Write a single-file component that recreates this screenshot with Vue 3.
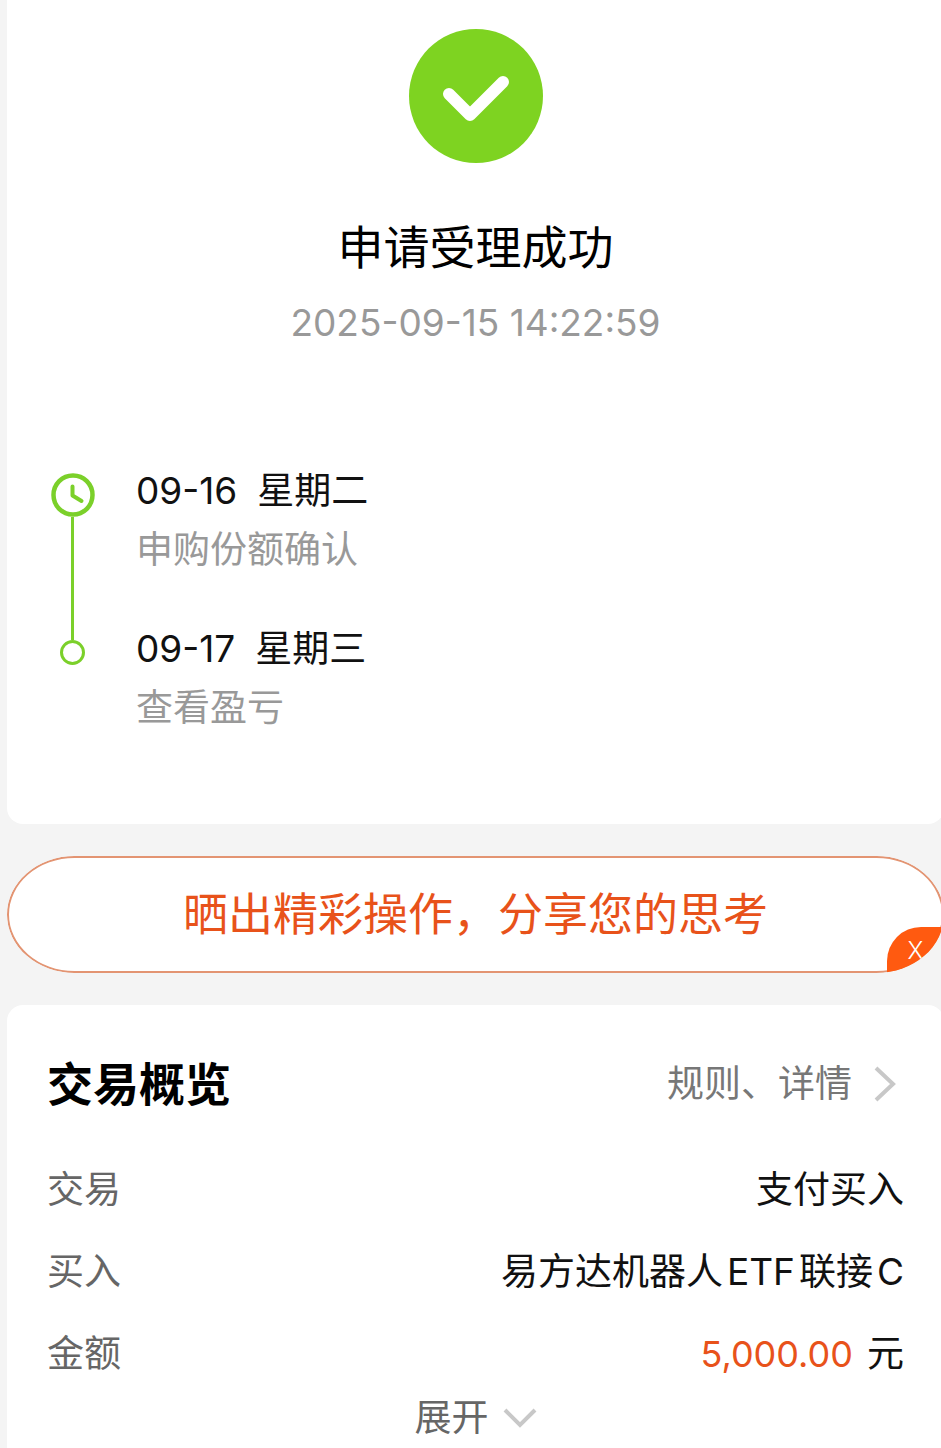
<script setup>
const steps = [
  { date: '09-16', day: '星期二', note: '申购份额确认', active: true },
  { date: '09-17', day: '星期三', note: '查看盈亏', active: false },
]
const rows = [
  { label: '交易', parts: ['支付买入'] },
  { label: '买入', parts: ['易方达机器人', 'ETF', '联接', 'C'] },
  { label: '金额', amount: '5,000.00', parts: ['元'] },
]
</script>

<template>
  <main class="page">
    <section class="card result">
      <svg class="success" viewBox="0 0 134 134" aria-hidden="true">
        <circle cx="67" cy="67" r="67" fill="#7ed321" />
        <path d="M40 65 L61 86 L94 53" fill="none" stroke="#fff" stroke-width="12" stroke-linecap="round" stroke-linejoin="round" />
      </svg>
      <h1 class="title">申请受理成功</h1>
      <time class="time" datetime="2025-09-15T14:22:59">2025-09-15 14:22:59</time>

      <ol class="timeline">
        <li v-for="step in steps" :key="step.date" class="step">
          <div class="rail" :class="{ first: step.active }">
            <template v-if="step.active">
              <svg class="clock" viewBox="0 0 44 44" aria-hidden="true">
                <circle cx="22" cy="22" r="19.5" fill="none" stroke="#7bd02a" stroke-width="4.500" />
                <path d="M21.5 13.500V22.500L30.500 28" fill="none" stroke="#7bd02a" stroke-width="4" stroke-linecap="round" stroke-linejoin="round" />
              </svg>
              <span class="line grow"></span>
            </template>
            <template v-else>
              <span class="line short"></span>
              <span class="dot"></span>
            </template>
          </div>
          <div class="info">
            <p class="date"><span>{{ step.date }}</span><span>{{ step.day }}</span></p>
            <p class="note">{{ step.note }}</p>
          </div>
        </li>
      </ol>
    </section>

    <div class="share">
      <button type="button" class="share-main">晒出精彩操作，分享您的思考</button>
      <button type="button" class="share-close" aria-label="关闭">X</button>
    </div>

    <section class="card overview">
      <header class="head">
        <h2>交易概览</h2>
        <a href="#" class="more">
          规则、详情
          <svg class="chev-right" viewBox="0 0 22 36" aria-hidden="true">
            <path d="M2 2 L19 18 L2 34" fill="none" stroke="#c8c8c8" stroke-width="4" />
          </svg>
        </a>
      </header>
      <dl class="rows">
        <div v-for="row in rows" :key="row.label" class="row">
          <dt>{{ row.label }}</dt>
          <dd>
            <span v-if="row.amount" class="amount">{{ row.amount }}</span>
            <span v-for="part in row.parts" :key="part">{{ part }}</span>
          </dd>
        </div>
      </dl>
      <button type="button" class="expand">
        展开
        <svg class="chev-down" viewBox="0 0 34 20" aria-hidden="true">
          <path d="M2 2 L17 17 L32 2" fill="none" stroke="#c8c8c8" stroke-width="4" />
        </svg>
      </button>
    </section>
  </main>
</template>

<style>
body {
  margin: 0;
  background: #f4f4f4;
}
</style>

<style scoped>
.page {
  display: flex;
  flex-direction: column;
  gap: 32px;
  padding-left: 7px;
  overflow-x: hidden;
  background: #f4f4f4;
  color: #111;
  font-family: Inter, "Noto Sans CJK SC", sans-serif;
  font-size: 37px;
}
.card,
.share {
  margin-right: -3px;
}
.card {
  padding: 0 40px;
  background: #fff;
}
h1, h2, p, ol, dl, dd {
  margin: 0;
  padding: 0;
}
button {
  border: 0;
  padding: 0;
  background: none;
  font: inherit;
  cursor: pointer;
}
.result {
  display: flex;
  flex-direction: column;
  align-items: center;
  padding-top: 29px;
  padding-bottom: 87px;
  border-radius: 0 0 16px 16px;
}
.success {
  width: 134px;
  height: 134px;
}
.title {
  margin-top: 54px;
  font-size: 46px;
  font-weight: 400;
  line-height: 60px;
  color: #000;
}
.time {
  margin-top: 22px;
  line-height: 48px;
  color: #999;
}
.timeline {
  align-self: stretch;
  margin-top: 114px;
  padding-left: 4px;
  list-style: none;
}
.step {
  display: flex;
  gap: 42px;
}
.step:not(:last-child) .info {
  padding-bottom: 40px;
}
.rail {
  display: flex;
  flex-direction: column;
  align-items: center;
  width: 43px;
}
.rail.first {
  padding-top: 12px;
}
.clock {
  width: 44px;
  height: 44px;
}
.line {
  width: 3px;
  background: #7bd02a;
}
.grow {
  flex: 1;
}
.short {
  height: 21px;
}
.dot {
  box-sizing: border-box;
  width: 25px;
  height: 25px;
  border: 3px solid #7bd02a;
  border-radius: 50%;
}
.date,
.note {
  line-height: 59px;
}
.date {
  display: flex;
  gap: 20px;
}
.note {
  color: #999;
}
.share {
  position: relative;
  overflow: hidden;
  border-radius: 68px / 59px;
}
.share-main {
  display: block;
  width: 100%;
  border: 2px solid #e39472;
  border-radius: inherit;
  background: #fff;
  font-size: 45px;
  line-height: 113px;
  color: #e8521a;
}
.share-close {
  position: absolute;
  right: 0;
  bottom: 0;
  width: 57px;
  height: 46px;
  border-radius: 34px 0 0 0;
  background: #ff5a10;
  color: #fff;
  font-size: 24px;
  font-weight: 300;
}
.overview {
  padding-top: 49px;
  padding-bottom: 7px;
  border-radius: 16px 16px 0 0;
}
.head {
  display: flex;
  justify-content: space-between;
  align-items: center;
  line-height: 60px;
}
.head h2 {
  font-size: 46px;
  font-weight: 700;
  color: #000;
}
.more {
  display: flex;
  align-items: center;
  gap: 22px;
  padding-right: 8px;
  color: #777;
  text-decoration: none;
}
.chev-right {
  width: 22px;
  height: 36px;
}
.rows {
  margin-top: 35px;
}
.row {
  display: flex;
  justify-content: space-between;
  line-height: 82px;
}
.row dt {
  color: #666;
}
.row dd {
  display: flex;
  gap: 4px;
}
.amount {
  margin-right: 10px;
  font-size: 36px;
  color: #e8521a;
}
.expand {
  display: flex;
  align-items: center;
  gap: 14px;
  margin: 0 auto;
  line-height: 46px;
  color: #666;
}
.chev-down {
  width: 34px;
  height: 20px;
}
</style>
